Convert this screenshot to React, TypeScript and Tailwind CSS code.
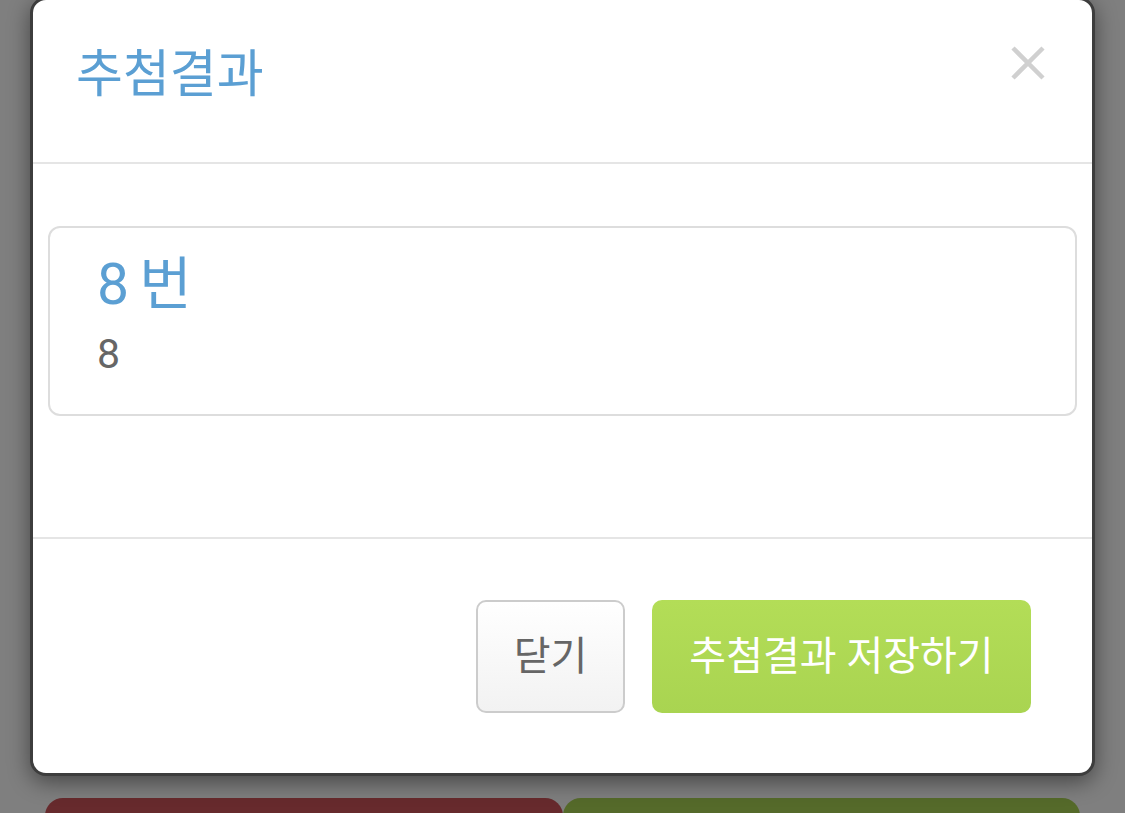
import React from 'react';

const font = { fontFamily: 'Roboto, "Noto Sans CJK KR", "Noto Sans", sans-serif' };

const CloseIcon: React.FC = () => (
  <svg width="34" height="34" viewBox="0 0 34 34" className="mt-[46px]">
    <path d="M2 2 L32 32 M32 2 L2 32" stroke="#d0d0d0" strokeWidth="4.5" strokeLinecap="butt" />
  </svg>
);

export default function App() {
  return (
    <div className="h-[813px] overflow-hidden bg-[#7f7f7f]" style={font}>
      {/* Modal */}
      <div className="relative z-10 px-[30px]">
        <div className="-mt-[3px] rounded-[16px] border-[3px] border-[#3d3d3d] bg-white shadow-[0_6px_22px_rgba(0,0,0,0.45)]">
          {/* Header */}
          <div className="flex h-[164px] justify-between border-b-2 border-[#e5e5e5] pl-[43px] pr-[47px]">
            <h4 className="pt-[45px] text-[51px] leading-[60px] text-[#5b9fd3]">추첨결과</h4>
            <CloseIcon />
          </div>

          {/* Body */}
          <div className="h-[373px] px-[15px] pt-[62px]">
            <div className="h-[190px] rounded-[12px] border-2 border-[#dddddd] pl-[47px] pt-[22px]">
              <h3 className="text-[57px] leading-[70px] text-[#5b9fd3]">
                8<span className="ml-[-4px]"> </span>번
              </h3>
              <p className="mt-[10px] text-[41px] leading-[48px] text-[#666666]">8</p>
            </div>
          </div>

          {/* Footer */}
          <div className="flex justify-end gap-[27px] border-t-2 border-[#e5e5e5] pb-[60px] pr-[61px] pt-[61px]">
            <button className="h-[113px] w-[149px] rounded-[10px] border-2 border-[#cccccc] bg-gradient-to-b from-white to-[#f2f2f2] text-[40px] text-[#666666]">
              닫기
            </button>
            <button className="h-[113px] w-[379px] rounded-[10px] bg-gradient-to-b from-[#b3dd57] to-[#a9d451] text-[40px] text-white">
              추첨결과 저장하기
            </button>
          </div>
        </div>
      </div>

      {/* Page buttons behind the backdrop */}
      <div className="mt-[22px] flex px-[45px]">
        <div className="h-[60px] flex-1 rounded-[18px] bg-[#672a2d]" />
        <div className="h-[60px] flex-1 rounded-[18px] bg-[#556a2a]" />
      </div>
    </div>
  );
}
